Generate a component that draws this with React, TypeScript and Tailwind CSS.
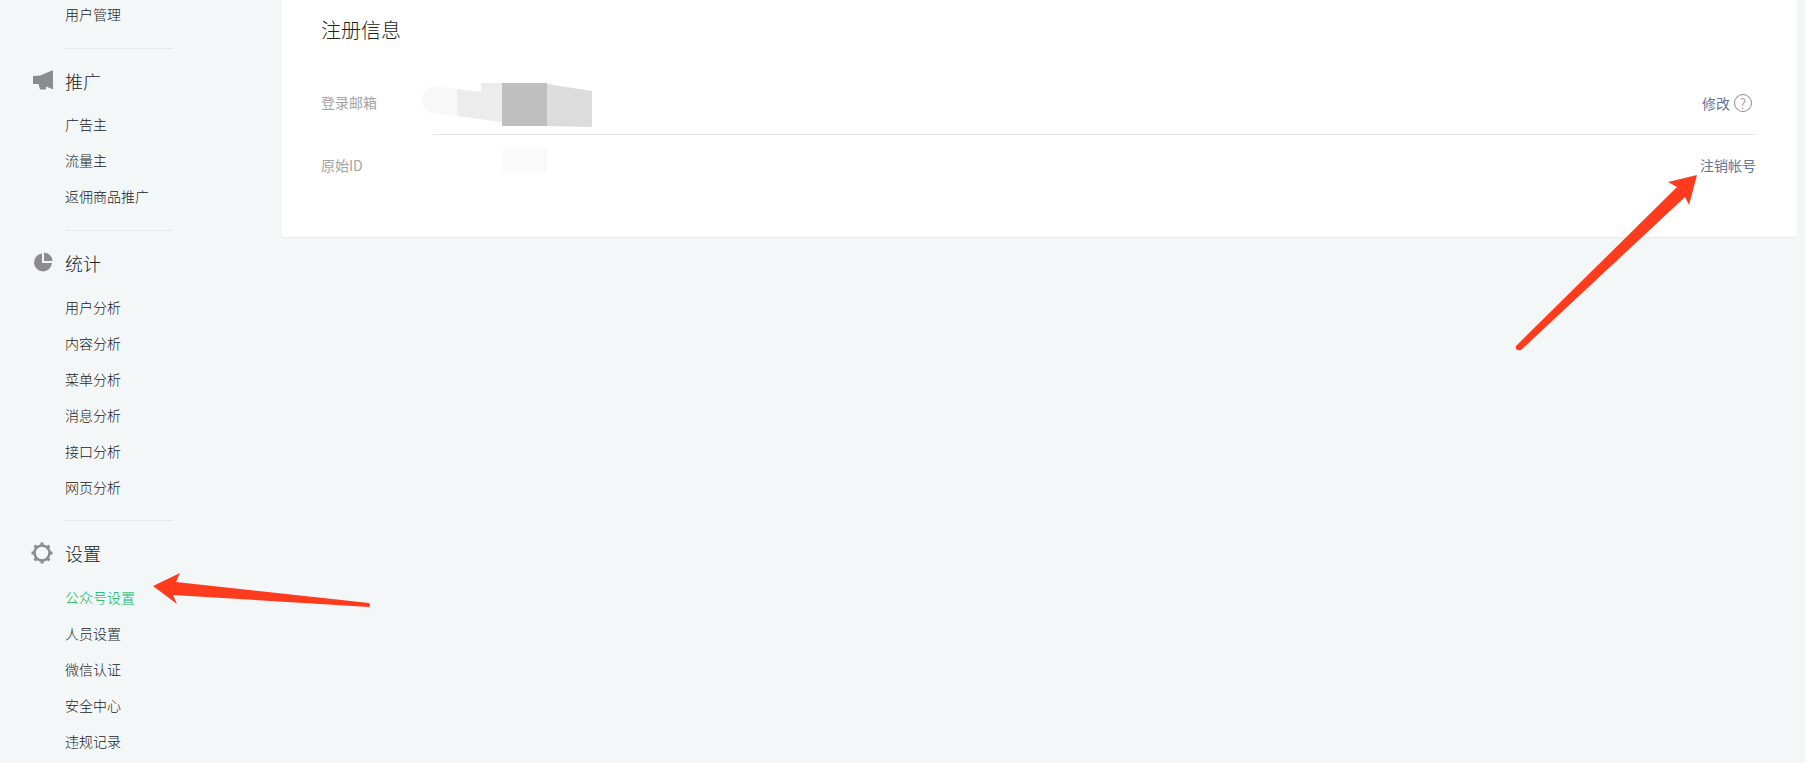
const font = { fontFamily: '"Noto Sans CJK SC", "Liberation Sans", sans-serif' };

function Megaphone() {
  return (
    <svg width="20" height="20" viewBox="0 0 20 20" className="shrink-0">
      <path fill="#8c8c8c" d="M0 6 L7 5.5 L19 0.5 L20 0.5 V19 L19 19 L13 16.5 L13 19.5 L7 19.5 L5.5 14 L0 14 Z" />
    </svg>
  );
}
function Pie() {
  return (
    <svg width="20" height="20" viewBox="0 0 20 20" className="shrink-0">
      <path fill="#8c8c8c" d="M9 1.5 A9 9 0 1 0 19 11 H9 Z" />
      <path fill="#8c8c8c" d="M11 0.5 A9 9 0 0 1 19.5 9 H11 Z" />
    </svg>
  );
}
function Gear() {
  return (
    <svg width="22" height="22" viewBox="0 0 22 22" className="shrink-0">
      <circle cx="11" cy="11" r="7.5" fill="none" stroke="#8c8c8c" strokeWidth="2.6" />
      {[0, 45, 90, 135, 180, 225, 270, 315].map((a) => (
        <rect key={a} x="9.5" y="0.5" width="3" height="3" fill="#8c8c8c" transform={`rotate(${a} 11 11)`} />
      ))}
    </svg>
  );
}

function Section({ icon, title, items, active, top, gap }: { icon: React.ReactNode; title: string; items: string[]; active?: string; top: string; gap: string }) {
  return (
    <div className={`border-t border-[#e4e8eb] pt-[14px] w-[108px] ${top}`}>
      <div className={`relative h-[36px] flex items-center text-[18px] font-light text-[#222222] ${gap}`}>
        <span className="absolute left-[-34px] top-[7px] w-[22px] flex justify-end">{icon}</span>
        {title}
      </div>
      {items.map((t) => (
        <div key={t} className={`h-[36px] pb-[1px] flex items-center text-[14px] font-light whitespace-nowrap ${t === active ? 'text-[#00b85a]' : 'text-[#222222]'}`}>
          {t}
        </div>
      ))}
    </div>
  );
}

export default function App() {
  return (
    <div style={font} className="relative h-[763px] w-[1805px] overflow-hidden bg-[#f4f7f8] flex">
      <aside className="w-[281px] shrink-0 pl-[65px] -mt-[3px]">
        <div className="h-[36px] pb-[1px] flex items-center text-[14px] font-light text-[#222222]">用户管理</div>
        <Section top="mt-[15px]" gap="mb-[8px]" icon={<Megaphone />} title="推广" items={['广告主', '流量主', '返佣商品推广']} />
        <Section top="mt-[15px]" gap="mb-[9px]" icon={<Pie />} title="统计" items={['用户分析', '内容分析', '菜单分析', '消息分析', '接口分析', '网页分析']} />
        <Section top="mt-[14px]" gap="mb-[9px]" icon={<Gear />} title="设置" items={['公众号设置', '人员设置', '微信认证', '安全中心', '违规记录']} active="公众号设置" />
      </aside>

      <main className="w-[1516px] shrink-0">
        <section className="h-[237px] bg-white rounded-b-[4px] shadow-[0_1px_2px_rgba(0,0,0,0.05)] pl-[40px] pr-[41px] pt-[15px]">
          <h2 className="text-[20px] leading-[30px] text-[#222222] font-light">注册信息</h2>
          <div className="mt-[27px] h-[63px] flex items-center">
            <span className="w-[112px] shrink-0 pb-[2px] text-[14px] text-[#a3a3a3]">登录邮箱</span>
            <div className="flex-1 self-stretch flex items-center justify-end gap-[4px] pr-[4px] border-b border-[#e4e8eb]">
              <span className="text-[14px] text-[#60749e]">修改</span>
              <span className="w-[18px] h-[18px] rounded-full border border-[#8c8c8c] text-[14px] font-light leading-none text-[#8c8c8c] flex items-center justify-center">?</span>
            </div>
          </div>
          <div className="h-[61px] flex items-center">
            <span className="w-[112px] shrink-0 text-[14px] text-[#a3a3a3]">原始ID</span>
            <div className="flex-1 flex justify-end">
              <span className="text-[14px] text-[#60749e]">注销帐号</span>
            </div>
          </div>
        </section>
      </main>

      <svg className="absolute left-0 top-0 pointer-events-none" width="1805" height="763" viewBox="0 0 1805 763">
        <path fill="#f8f8f8" d="M436 86 L457 89 V116 L436 114 A14 14 0 0 1 436 86 Z" />
        <path fill="#ececec" d="M457 89 L481 92 V83 H502 V122 L457 116 Z" />
        <rect fill="#bfbfbf" x="502" y="83" width="45" height="43" />
        <path fill="#dcdcdc" d="M547 84 L592 91 V127 L547 126 Z" />
        <rect fill="#fafafa" x="502" y="149" width="45" height="24" />
        <path fill="#ff3b1d" d="M1668 182 L1697 175 L1689 205 L1685 197 L1521 350 Q1518 351 1516 349 Q1515 347 1517 345 L1677 187 Z" />
        <path fill="#ff3b1d" d="M153 586 L180 573 L176 582 L369 603 Q371 605 369 607 L173 595 L177 604 Z" />
      </svg>
    </div>
  );
}
